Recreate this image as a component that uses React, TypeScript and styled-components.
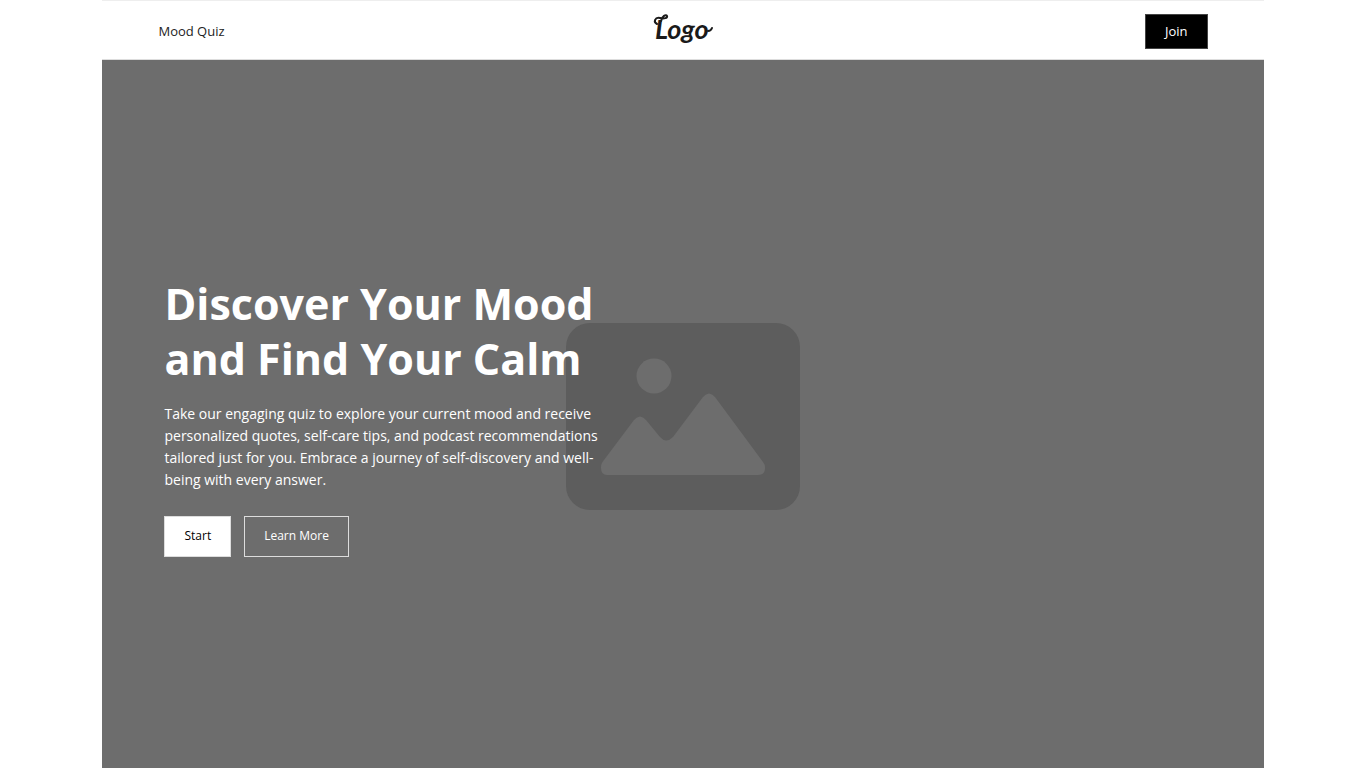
import React from "react";
import styled, { createGlobalStyle } from "styled-components";

const GlobalStyle = createGlobalStyle`
  *, *::before, *::after { box-sizing: border-box; }
  body {
    margin: 0;
    background: #fff;
    color: #222;
    font-family: "Segoe UI", "Open Sans", "Noto Sans", sans-serif;
    font-size: 13px;
    line-height: 20px;
  }
`;

const Page = styled.div`
  width: 85%;
  margin: 0 auto;
`;

const Header = styled.header`
  display: grid;
  grid-template-columns: 1fr auto 1fr;
  align-items: center;
  height: 60px;
  padding: 2px 56px 0;
  border-top: 1px solid #eee;
  border-bottom: 1px solid #ddd;
`;

const NavLink = styled.a`
  color: #222;
  text-decoration: none;
`;

const LogoLink = styled.a`
  display: block;
  color: #1a1a1a;
  line-height: 0;
`;

const LogoMark = styled.svg`
  display: block;
  width: 60px;
  height: 36px;
  overflow: visible;
  font-family: Lato, sans-serif;
  font-size: 27px;
  font-style: italic;
  font-weight: 700;
`;

const Button = styled.button<{ $tone: "dark" | "light" | "outline"; $compact?: boolean }>`
  height: ${(p) => (p.$compact ? 35 : 41)}px;
  padding: 0 19px;
  border: 1px solid ${(p) => (p.$tone === "dark" ? "#444" : "#ddd")};
  border-radius: 0;
  background: ${(p) => ({ dark: "#000", light: "#fff", outline: "transparent" })[p.$tone]};
  color: ${(p) => (p.$tone === "light" ? "#000" : "#fff")};
  font: inherit;
  font-size: ${(p) => (p.$compact ? 13 : 12)}px;
  cursor: pointer;
`;

const JoinButton = styled(Button)`
  justify-self: end;
`;

const Hero = styled.section`
  display: grid;
  align-items: center;
  min-height: calc(100vh - 56px);
  background: #6d6d6d;
  color: #fff;

  > * {
    grid-area: 1 / 1;
  }
`;

const Placeholder = styled.svg`
  justify-self: center;
  width: 234px;
  height: 187px;
`;

const Content = styled.div`
  z-index: 1;
  max-width: 560px;
  padding: 0 62px;
`;

const Title = styled.h1`
  margin: 0 0 17px;
  font-size: 43px;
  font-weight: 700;
  line-height: 55px;
`;

const Lead = styled.p`
  margin: 0 0 25px;
  font-size: 14px;
  line-height: 22px;
`;

const Actions = styled.div`
  display: flex;
  gap: 13px;
`;

export default function App() {
  return (
    <>
      <GlobalStyle />
      <Page>
        <Header>
          <nav>
            <NavLink href="#quiz">Mood Quiz</NavLink>
          </nav>
          <LogoLink href="#home">
            <LogoMark viewBox="0 0 60 36" role="img" aria-label="Logo">
              <text x="2" y="26" fill="currentColor">Logo</text>
              <g fill="none" stroke="currentColor" strokeWidth="2" strokeLinecap="round">
                <path d="M4 11C0 9 2 4 7 5C11 6 15 5 14 3C13 1 9 3 8 8" />
                <path d="M55 18Q58 18 59 15" />
              </g>
            </LogoMark>
          </LogoLink>
          <JoinButton type="button" $tone="dark" $compact>Join</JoinButton>
        </Header>
        <main>
          <Hero>
            <Placeholder viewBox="0 0 234 187" aria-hidden="true">
              <rect width="234" height="187" rx="24" fill="#5d5d5d" />
              <g fill="#6d6d6d">
                <circle cx="88" cy="53" r="17.5" />
                <path d="M36.500 139L68 97Q74 90 80 97L94 114Q100 121 107 114L137 74Q143 67 149 74L197 139Q199 141 199 145Q199 152 192 152H41Q35 152 35 145Q35 141 36.500 139Z" />
              </g>
            </Placeholder>
            <Content>
              <Title>
                Discover Your Mood
                <br />
                and Find Your Calm
              </Title>
              <Lead>
                Take our engaging quiz to explore your current mood and receive personalized quotes,
                self-care tips, and podcast recommendations tailored just for you. Embrace a journey of
                self-discovery and well-being with every answer.
              </Lead>
              <Actions>
                <Button type="button" $tone="light">Start</Button>
                <Button type="button" $tone="outline">Learn More</Button>
              </Actions>
            </Content>
          </Hero>
        </main>
      </Page>
    </>
  );
}
